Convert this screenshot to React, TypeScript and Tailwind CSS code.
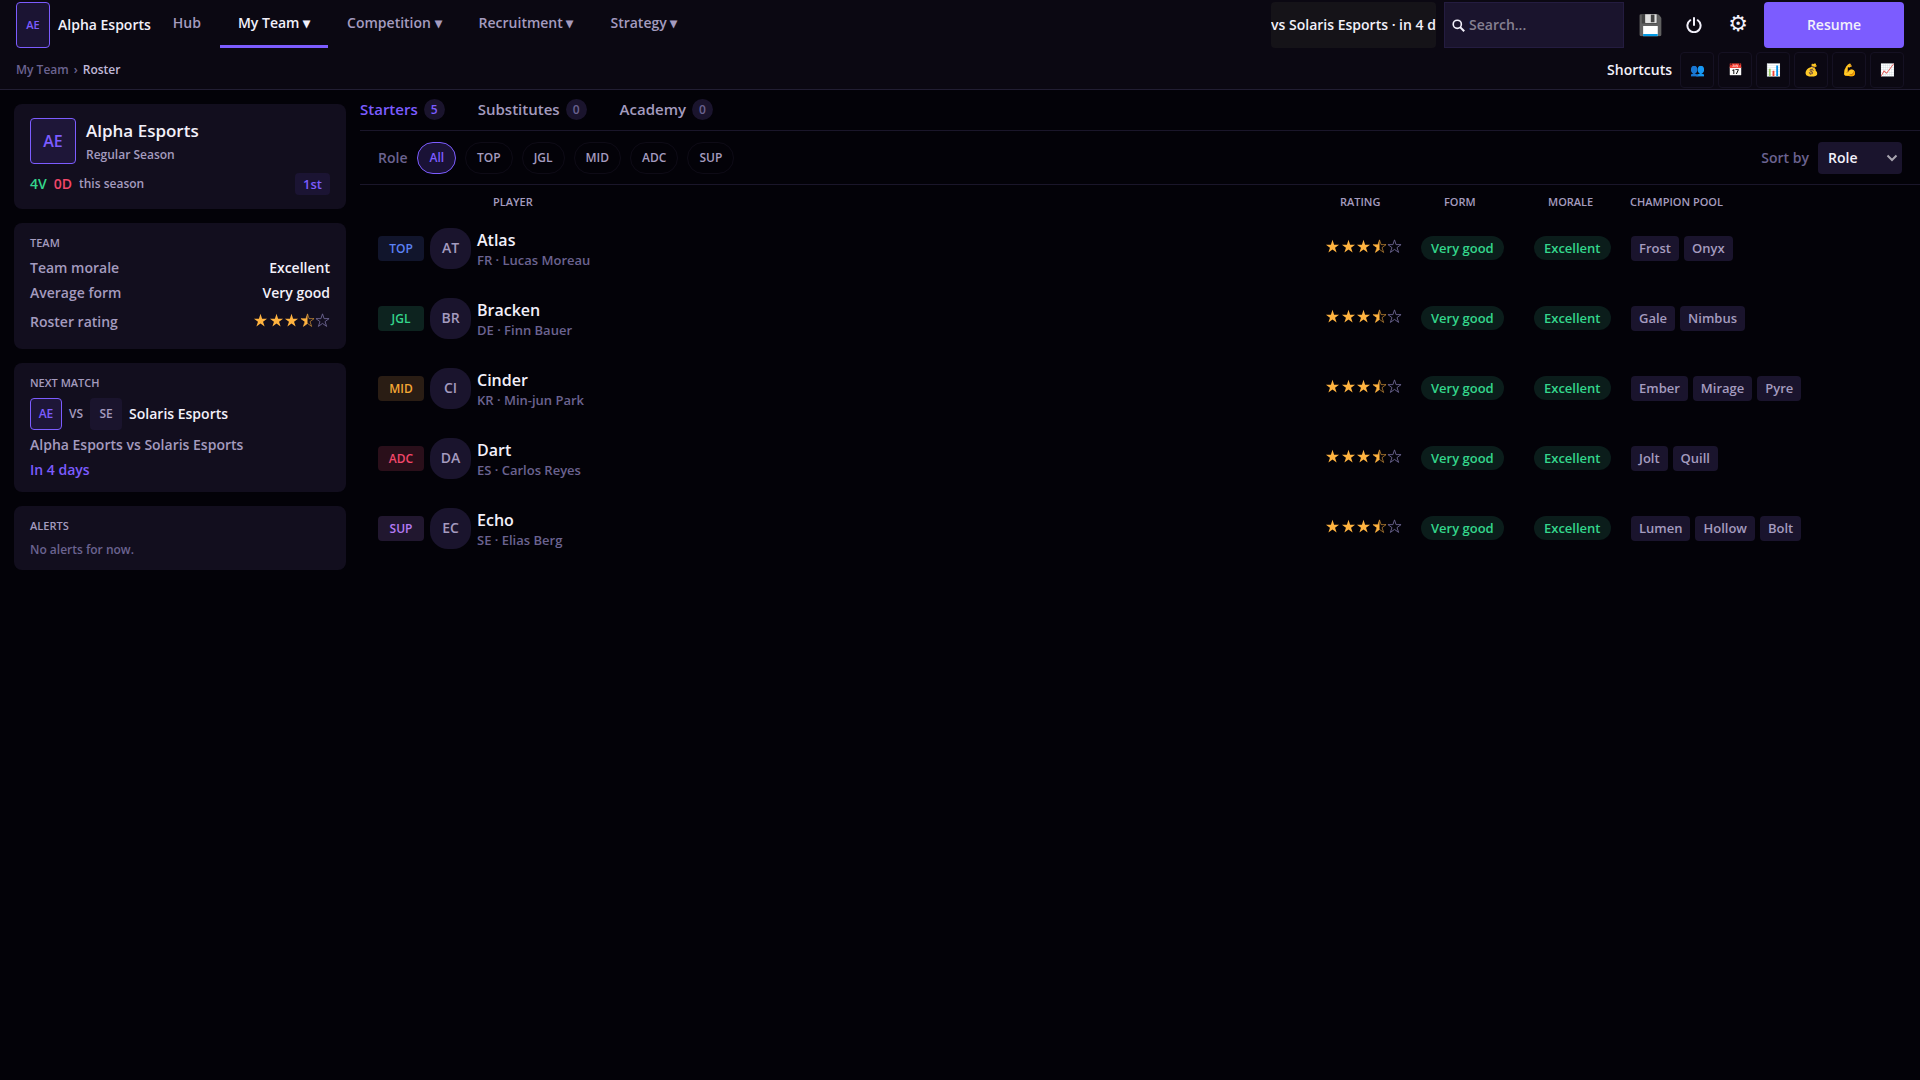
import React, { useState } from 'react';

type Player = {
  role: string;
  initials: string;
  name: string;
  info: string;
  champions: string[];
};

const players: Player[] = [
  { role: 'TOP', initials: 'AT', name: 'Atlas', info: 'FR · Lucas Moreau', champions: ['Frost', 'Onyx'] },
  { role: 'JGL', initials: 'BR', name: 'Bracken', info: 'DE · Finn Bauer', champions: ['Gale', 'Nimbus'] },
  { role: 'MID', initials: 'CI', name: 'Cinder', info: 'KR · Min-jun Park', champions: ['Ember', 'Mirage', 'Pyre'] },
  { role: 'ADC', initials: 'DA', name: 'Dart', info: 'ES · Carlos Reyes', champions: ['Jolt', 'Quill'] },
  { role: 'SUP', initials: 'EC', name: 'Echo', info: 'SE · Elias Berg', champions: ['Lumen', 'Hollow', 'Bolt'] },
];

const roleColors: Record<string, string> = {
  TOP: 'bg-[#11152c] text-[#5b82f5]',
  JGL: 'bg-[#0d231f] text-[#34d68c]',
  MID: 'bg-[#2a1d14] text-[#f5a834]',
  ADC: 'bg-[#2a0f1a] text-[#f2476a]',
  SUP: 'bg-[#21172f] text-[#b57bf5]',
};

const menus = ['My Team', 'Competition', 'Recruitment', 'Strategy'];

const shortcuts = [
  { icon: '👥', label: 'Roster' },
  { icon: '📅', label: 'Calendar' },
  { icon: '📊', label: 'Standings' },
  { icon: '💰', label: 'Finances' },
  { icon: '💪', label: 'Training' },
  { icon: '📈', label: 'Statistics' },
];

const tabs = [
  { name: 'Starters', count: 5 },
  { name: 'Substitutes', count: 0 },
  { name: 'Academy', count: 0 },
];

const STAR = 'M8 0.9 L9.7 6 L15 6 L10.7 9.2 L12.4 14.3 L8 11.1 L3.6 14.3 L5.3 9.2 L1 6 L6.3 6 Z';
const HALF_STAR = 'M8 0.9 L8 11.1 L3.6 14.3 L5.3 9.2 L1 6 L6.3 6 Z';

function Stars() {
  return (
    <span className="flex justify-between w-[77px]" role="img" aria-label="3.5 out of 5">
      {[0, 1, 2, 3, 4].map(i => (
        <svg key={i} viewBox="0 0 16 16" className="w-[15px] h-[15px]">
          {i < 3 && <path d={STAR} fill="#ffb340" />}
          {i === 3 && (
            <>
              <path d={HALF_STAR} fill="#ffb340" />
              <path d={STAR} fill="none" stroke="#ffb340" strokeWidth="0.6" />
            </>
          )}
          {i === 4 && <path d={STAR} fill="none" stroke="#6b6390" strokeWidth="1" />}
        </svg>
      ))}
    </span>
  );
}

function Card({ title, children }: { title?: string; children: React.ReactNode }) {
  return (
    <section className="rounded-lg bg-[#120e1e] px-4 pt-3.5 pb-3">
      {title && <h2 className="text-[11px] leading-3 text-[#a49bbf] mb-[9px]">{title}</h2>}
      {children}
    </section>
  );
}

function Header() {
  return (
    <header className="bg-[#0b0812] border-b border-[#221e33] px-4 pt-0.5">
      <div className="flex items-stretch h-[46px]">
        <div className="flex items-center w-[34px] justify-center rounded border border-[#7c5cff] bg-[#1b1433] text-[#7c5cff] text-[11px]">AE</div>
        <span className="self-center ml-2 text-sm text-[#f2f0fa]">Alpha Esports</span>
        <nav className="flex gap-px ml-1 text-sm text-[#a49bbf]">
          <button className="px-[18px] pb-0.5 border-b-[3px] border-transparent">Hub</button>
          {menus.map(m => (
            <button
              key={m}
              className={m === 'My Team' ? 'px-[18px] pb-0.5 border-b-[3px] border-[#7c5cff] text-[#f2f0fa]' : 'px-[18px] pb-0.5 border-b-[3px] border-transparent'}
            >
              {m} ▾
            </button>
          ))}
        </nav>
        <div className="ml-auto flex">
          <div className="w-[165px] mr-2 flex items-center justify-center overflow-hidden whitespace-nowrap rounded bg-[#151318] text-sm text-[#f2f0fa]">
            vs Solaris Esports · in 4 d
          </div>
          <label className="flex items-center w-[180px] gap-1 px-[7px] border border-[#241c40] bg-[#1a142d]">
            <svg viewBox="0 0 16 16" className="w-[13px] h-[13px] shrink-0" fill="none" stroke="#f2f0fa" strokeWidth="2">
              <circle cx="6.5" cy="6.5" r="5" />
              <path d="M10 10 L15 15" strokeWidth="2.6" />
            </svg>
            <input type="text" aria-label="Search" placeholder="Search..." className="min-w-0 w-full bg-transparent text-sm outline-none placeholder:text-[#858091]" />
          </label>
          <div className="flex mx-1 text-[#f2f0fa]">
            <button aria-label="Save" className="w-11 text-xl">💾</button>
            <button aria-label="Power" className="w-11 flex items-center justify-center">
              <svg viewBox="0 0 16 16" className="w-4 h-4" fill="none" stroke="#f2f0fa" strokeWidth="2" strokeLinecap="round">
                <path d="M8 1 V8" />
                <path d="M4.2 3.2 A6.6 6.6 0 1 0 11.8 3.2" />
              </svg>
            </button>
            <button aria-label="Settings" className="w-11 text-[22px] leading-6 pb-0.5 font-['DejaVu_Sans']">⚙</button>
          </div>
          <button className="w-[140px] rounded bg-[#7c5cff] text-sm text-[#f2f0fa]">Resume</button>
        </div>
      </div>
      <div className="flex items-center justify-between pt-1 pb-px">
        <div className="flex gap-[5px] text-xs text-[#6b6390]">
          <a href="#team">My Team</a>
          <span>›</span>
          <span className="text-[#c0b8d8]">Roster</span>
        </div>
        <div className="flex items-center gap-1">
          <span className="mr-1 text-sm text-[#f2f0fa]">Shortcuts</span>
          {shortcuts.map(s => (
            <button key={s.label} aria-label={s.label} className="w-[34px] h-9 rounded border border-[#151122] text-xs">
              {s.icon}
            </button>
          ))}
        </div>
      </div>
    </header>
  );
}

function Sidebar() {
  return (
    <aside className="w-[332px] shrink-0 flex flex-col gap-3.5">
      <Card>
        <div className="flex gap-2.5">
          <div className="flex items-center justify-center w-[46px] h-[46px] rounded border border-[#7c5cff] bg-[#1e1638] text-[#7c5cff] text-base">AE</div>
          <div>
            <h1 className="text-[17px] leading-[26px] text-[#f2f0fa]">Alpha Esports</h1>
            <p className="text-xs leading-[22px] text-[#a49bbf]">Regular Season</p>
          </div>
        </div>
        <div className="flex items-center gap-[7px] mt-[7px] pb-0.5 text-sm leading-[22px]">
          <span className="text-[#34d68c]">4V</span>
          <span className="text-[#f2476a]">0D</span>
          <span className="text-xs text-[#a49bbf]">this season</span>
          <span className="ml-auto rounded bg-[#1b1433] px-2 text-[13px] leading-[22px] text-[#7c5cff]">1st</span>
        </div>
      </Card>
      <Card title="TEAM">
        <dl className="grid grid-cols-2 gap-y-[5px] text-sm leading-5 text-[#a49bbf] pb-[5px]">
          <dt>Team morale</dt>
          <dd className="text-right text-[#f2f0fa]">Excellent</dd>
          <dt>Average form</dt>
          <dd className="text-right text-[#f2f0fa]">Very good</dd>
          <dt className="pt-1">Roster rating</dt>
          <dd className="flex justify-end items-center"><Stars /></dd>
        </dl>
      </Card>
      <Card title="NEXT MATCH">
        <div className="flex items-center gap-[7px] text-sm">
          <span className="flex items-center justify-center w-8 h-8 rounded border border-[#7c5cff] bg-[#1e1638] text-[#7c5cff] text-xs">AE</span>
          <span className="text-xs text-[#a49bbf]">VS</span>
          <span className="flex items-center justify-center w-8 h-8 rounded bg-[#1a142d] text-[#a49bbf] text-xs">SE</span>
          <span className="text-[#f2f0fa]">Solaris Esports</span>
        </div>
        <p className="mt-[5px] text-sm leading-5 text-[#a49bbf]">Alpha Esports vs Solaris Esports</p>
        <p className="mt-[5px] text-sm leading-5 text-[#7c5cff]">In 4 days</p>
      </Card>
      <Card title="ALERTS">
        <p className="text-xs leading-[17px] text-[#6b6390]">No alerts for now.</p>
      </Card>
    </aside>
  );
}

export default function App() {
  const [tab, setTab] = useState('Starters');
  const [role, setRole] = useState('All');
  const shown = tab !== 'Starters' ? [] : players.filter(p => role === 'All' || p.role === role);

  return (
    <div className="min-h-screen bg-[#030208] font-['Open_Sans',sans-serif] font-semibold">
      <Header />
      <div className="flex gap-3.5 pl-3.5">
        <div className="pt-3.5"><Sidebar /></div>
        <main className="grow min-w-0">
          <div className="flex gap-[33px] h-[41px] items-center pb-0.5 border-b border-[#1a162a] text-[15px]">
            {tabs.map(t => (
              <button key={t.name} onClick={() => setTab(t.name)} className={t.name === tab ? 'flex items-center gap-1.5 text-[#7c5cff]' : 'flex items-center gap-1.5 text-[#a49bbf]'}>
                {t.name}
                <span className={t.name === tab ? 'w-[21px] rounded-full bg-[#1a142d] text-xs leading-[21px]' : 'w-[21px] rounded-full bg-[#1a142d] text-xs leading-[21px] text-[#6b6390]'}>{t.count}</span>
              </button>
            ))}
          </div>
          <div className="flex items-center h-[54px] border-b border-[#1a162a] pl-[18px] pr-[18px] text-sm text-[#6b6390]">
            <span className="mr-2.5">Role</span>
            <div className="flex gap-[9px] text-xs">
              {['All', 'TOP', 'JGL', 'MID', 'ADC', 'SUP'].map(r => (
                <button
                  key={r}
                  onClick={() => setRole(r)}
                  className={r === role ? 'h-8 px-[11px] rounded-full border border-[#7c5cff] bg-[#1a1236] text-[#7c5cff]' : 'h-8 px-[11px] rounded-full border border-[#0e0b16] text-[#a49bbf]'}
                >
                  {r}
                </button>
              ))}
            </div>
            <label htmlFor="sort" className="ml-auto mr-[9px]">Sort by</label>
            <div className="relative">
              <select id="sort" className="appearance-none w-[84px] h-8 rounded bg-[#1a142d] pl-2.5 text-sm text-[#f2f0fa] outline-none">
                <option>Role</option>
                <option>Rating</option>
              </select>
              <svg viewBox="0 0 12 12" className="absolute right-1 top-2.5 w-3 h-3 pointer-events-none" fill="none" stroke="#a8a5b0" strokeWidth="2">
                <path d="M1.5 3.5 L6 8 L10.5 3.5" />
              </svg>
            </div>
          </div>
          <table className="w-full table-fixed text-left">
            <colgroup>
              <col className="w-[117px]" />
              <col />
              <col className="w-[96px]" />
              <col className="w-[113px]" />
              <col className="w-[96px]" />
              <col className="w-[290px]" />
            </colgroup>
            <thead>
              <tr className="h-[34px] text-[11px] text-[#a49bbf] [&>th]:font-semibold">
                <th aria-label="Role"></th>
                <th className="pl-4">PLAYER</th>
                <th className="pl-[15px]">RATING</th>
                <th className="pl-[23px]">FORM</th>
                <th className="pl-3.5">MORALE</th>
                <th>CHAMPION POOL</th>
              </tr>
            </thead>
            <tbody>
              {shown.map(p => (
                <tr key={p.name} className="h-[70px] align-top">
                  <td className="pl-[18px] pt-[9px]">
                    <div className="flex items-center gap-1.5">
                      <span className={`${roleColors[p.role]} w-[46px] rounded text-center text-xs leading-[25px]`}>{p.role}</span>
                      <span className="w-[41px] h-[41px] rounded-[18px] bg-[#1a142d] text-center text-sm leading-10 text-[#a49bbf]">{p.initials}</span>
                    </div>
                  </td>
                  <td className="pt-[9px]">
                    <div className="text-base leading-6 text-[#f2f0fa]">{p.name}</div>
                    <div className="text-[13px] leading-[17px] text-[#6b6390]">{p.info}</div>
                  </td>
                  <td className="pt-5"><Stars /></td>
                  <td className="pt-[17px]">
                    <span className="flex w-fit rounded-full bg-[#0b1d1b] px-2.5 text-[13px] leading-6 text-[#34d68c]">Very good</span>
                  </td>
                  <td className="pt-[17px]">
                    <span className="flex w-fit rounded-full bg-[#0b1d1b] px-2.5 text-[13px] leading-6 text-[#34d68c]">Excellent</span>
                  </td>
                  <td className="pt-[17px] pl-px">
                    <div className="flex gap-[5px]">
                      {p.champions.map(c => (
                        <span key={c} className="rounded bg-[#1a142d] px-2 text-[13px] leading-[25px] text-[#a49bbf]">{c}</span>
                      ))}
                    </div>
                  </td>
                </tr>
              ))}
            </tbody>
          </table>
        </main>
      </div>
    </div>
  );
}
